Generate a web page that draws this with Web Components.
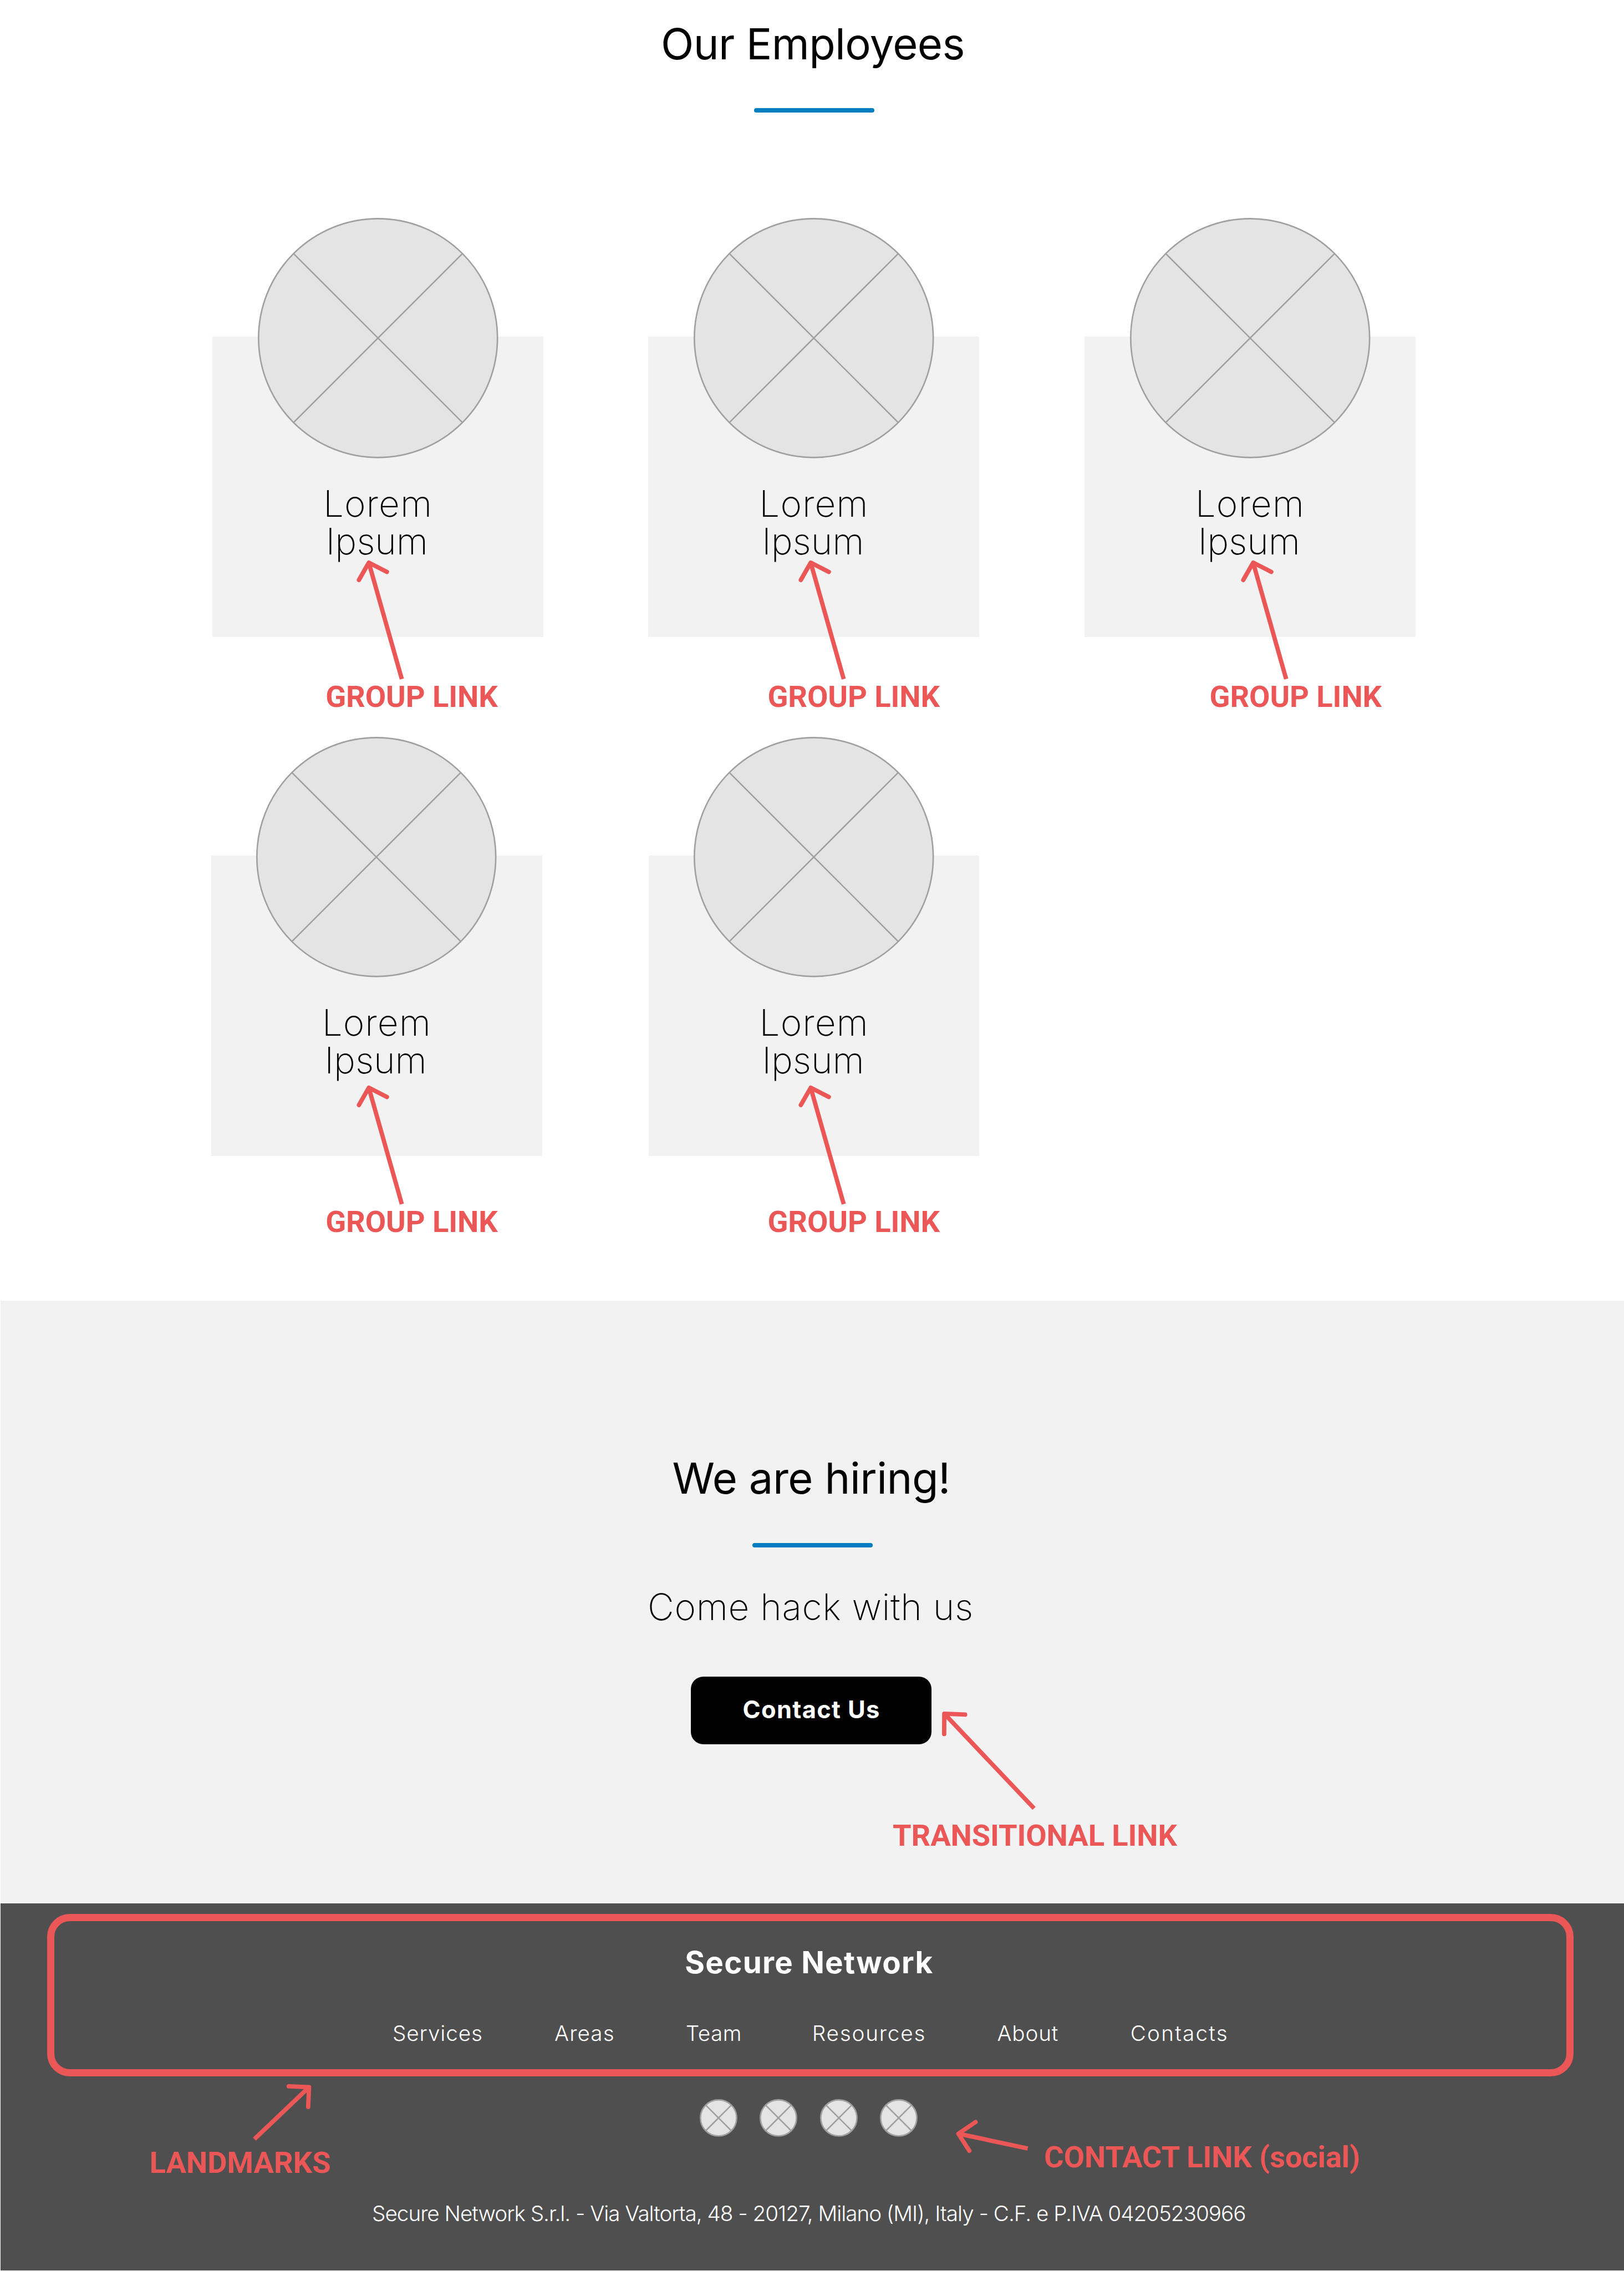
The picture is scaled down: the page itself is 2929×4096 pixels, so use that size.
<!DOCTYPE html>
<html lang="en">
<head>
<meta charset="utf-8">
<title>Our Employees</title>
<style>
  /* 1rem = 100 design units on a 3000-unit wide page */
  html { font-size: calc(100vw / 30); background: #fff; }
  body { margin: 0; font-family: Inter, "Liberation Sans", sans-serif; color: #000; overflow: hidden; }
</style>
</head>
<body>
<wire-page></wire-page>
<script>
const U = () => parseFloat(getComputedStyle(document.documentElement).fontSize) / 100;
const pen = document.createElement('canvas').getContext('2d');
const define = (name, html, setup) => {
  const tpl = document.createElement('template');
  tpl.innerHTML = html;
  customElements.define(name, class extends HTMLElement {
    constructor() {
      super();
      this.attachShadow({ mode: 'open' }).append(tpl.content.cloneNode(true));
    }
    connectedCallback() { if (setup) setup.call(this, this.shadowRoot); }
  });
};

/* One line of text whose box is exactly its inked width and its cap height.
   w: inked width, cap: cap height, size / weight / face: font. */
define('type-line', `
  <style>
    :host { display: flow-root; flex: none; white-space: nowrap; }
    span { display: block; }
  </style>
  <span></span>`, function (root) {
  const u = U(), a = n => this.getAttribute(n);
  const face = a('face') || 'Inter', weight = a('weight') || '400';
  const size = +a('size') * u, cap = +a('cap') * u, w = +a('w') * u;
  const text = this.textContent.trim();
  const span = root.querySelector('span');
  span.textContent = text;
  pen.font = `${weight} ${size}px ${face}, "Liberation Sans", sans-serif`;
  const m = pen.measureText(text);
  const ink = m.actualBoundingBoxLeft + m.actualBoundingBoxRight;
  const rise = Math.round(m.fontBoundingBoxAscent) - Math.round(m.fontBoundingBoxDescent);
  /* whole-pixel line height with an even half-leading keeps the baseline on the box's bottom edge */
  const base = Math.ceil(cap), leading = 2 * base - rise;
  this.style.cssText = `width:${w}px;height:${cap}px`;
  span.style.cssText = `font:${weight} ${size}px/${leading}px ${face},"Liberation Sans",sans-serif;` +
    `letter-spacing:${(w - ink) / (text.length - 1)}px;margin:${cap - base + 1}px 0 0 ${m.actualBoundingBoxLeft}px`;
});

define('accent-bar', `
  <style>:host { display: block; width: 2.225rem; height: .083rem; border-radius: .042rem; background: #007dc0; }</style>`);

define('image-dot', `
  <style>
    :host { display: block; flex: none; width: var(--d); height: var(--d); }
    svg { display: block; width: 100%; height: 100%; overflow: visible; }
  </style>
  <svg><circle cx="50%" cy="50%" fill="#e4e4e4" stroke="#a0a0a0"/><path fill="none" stroke="#a0a0a0"/></svg>`,
  function (root) {
    const d = +this.getAttribute('size'), s = 2.7, r = (d - s) / 2, k = r * Math.SQRT1_2, c = d / 2;
    this.style.setProperty('--d', d / 100 + 'rem');
    const svg = root.querySelector('svg');
    svg.setAttribute('viewBox', `0 0 ${d} ${d}`);
    svg.setAttribute('stroke-width', s);
    root.querySelector('circle').setAttribute('r', r);
    root.querySelector('path').setAttribute('d',
      `M${c - k} ${c - k}L${c + k} ${c + k}M${c + k} ${c - k}L${c - k} ${c + k}`);
  });

define('person-card', `
  <style>
    :host { display: flex; flex: none; flex-direction: column; align-items: center; box-sizing: border-box;
            width: 6.113rem; height: 5.553rem; background: #f2f2f2; }
    image-dot { margin-top: -2.19rem; }
    .first { margin: .575rem 0 .205rem; }
    type-line { margin-right: .025rem; }
  </style>
  <image-dot size="444"></image-dot>
  <type-line class="first" w="189.5" cap="49" size="67.4" weight="200">Lorem</type-line>
  <type-line w="177.5" cap="49" size="67.4" weight="200">Ipsum</type-line>`);

/* Arrow plus caption laid over the page. Coordinates are page units. */
define('arrow-note', `
  <style>
    :host { position: absolute; left: 0; top: 0; color: #eb5757; }
    svg { position: absolute; left: 0; top: 0; width: 1rem; height: 1rem; overflow: visible; }
  </style>
  <svg viewBox="0 0 100 100" fill="none" stroke="#eb5757" stroke-width="8" stroke-linejoin="round">
    <path class="shaft"/><path class="head" stroke-linecap="round"/>
  </svg>`, function (root) {
  const a = n => this.getAttribute(n);
  root.querySelector('.shaft').setAttribute('d', `M${a('tip')}L${a('tail')}`);
  root.querySelector('.head').setAttribute('d', `M${a('wing1')}L${a('tip')}L${a('wing2')}`);
  const [x, base] = a('at').split(' ').map(Number);
  const line = document.createElement('type-line');
  line.setAttribute('face', 'Roboto');
  line.setAttribute('weight', '700');
  line.setAttribute('size', '55.6');
  line.setAttribute('cap', '39.8');
  line.setAttribute('w', a('w'));
  line.textContent = this.textContent;
  const holder = document.createElement('div');
  holder.style.cssText = `position:absolute;left:${x / 100}rem;top:${(base - 39.8) / 100}rem`;
  holder.append(line);
  root.append(holder);
});

define('group-note', `
  <style>:host { position: absolute; left: var(--x); top: var(--y); }</style>
  <arrow-note tip="78 -265.5" tail="139 -50.5" wing1="59.8 -233.5" wing2="111.5 -248.5" at="0 0" w="316.5">GROUP LINK</arrow-note>`,
  function () {
    this.style.setProperty('--x', this.getAttribute('x') / 100 + 'rem');
    this.style.setProperty('--y', this.getAttribute('y') / 100 + 'rem');
  });

define('team-section', `
  <style>
    :host { display: flex; flex-direction: column; box-sizing: border-box; height: 24.027rem; padding-top: .508rem; }
    .title { margin-left: 12.25rem; }
    accent-bar { margin: .917rem 0 0 13.925rem; }
    .row { display: flex; }
    .one { padding-left: 3.923rem; gap: 1.942rem; margin-top: 4.137rem; }
    .two { padding-left: 3.9rem; gap: 1.967rem; margin-top: 4.032rem; }
  </style>
  <type-line class="title" w="554.5" cap="57.5" size="79.5">Our Employees</type-line>
  <accent-bar></accent-bar>
  <div class="row one"><person-card></person-card><person-card></person-card><person-card></person-card></div>
  <div class="row two"><person-card></person-card><person-card></person-card></div>`);

define('contact-button', `
  <style>
    :host { display: flex; justify-content: center; align-items: center; box-sizing: border-box;
            width: 4.445rem; height: 1.25rem; padding-bottom: .05rem; border-radius: .23rem; background: #000; color: #fff; }
  </style>
  <type-line w="250.5" cap="32.2" size="44.5" weight="700">Contact Us</type-line>`);

define('hiring-section', `
  <style>
    :host { display: flex; flex-direction: column; box-sizing: border-box; height: 11.138rem;
            margin-left: .01rem; padding-top: 2.985rem; background: #f2f2f2; }
    .title { margin-left: 12.42rem; }
    accent-bar { margin: .914rem 0 0 13.887rem; }
    .lead { margin: .842rem 0 0 11.995rem; }
    contact-button { margin: 1.055rem 0 0 12.75rem; }
  </style>
  <type-line class="title" w="507.5" cap="57.5" size="79.5">We are hiring!</type-line>
  <accent-bar></accent-bar>
  <type-line class="lead" w="594" cap="49" size="67.4" weight="200">Come hack with us</type-line>
  <contact-button></contact-button>`);

define('site-footer', `
  <style>
    :host { display: flex; flex-direction: column; box-sizing: border-box; height: 6.775rem;
            margin-left: .01rem; padding-top: .195rem; background: #4f4f4f; color: #fff; }
    .landmarks { box-sizing: border-box; width: 28.203rem; height: 3rem; margin-left: .857rem; padding: .54rem 0 0 6.273rem;
                 border: .14rem solid #eb5757; border-radius: .42rem; }
    .brand { margin-left: 5.4rem; }
    nav { display: flex; justify-content: space-between; width: 15.38rem; margin-top: .97rem; }
    .social { display: flex; gap: .415rem; margin: .417rem 0 0 12.917rem; }
    .legal { margin: 1.268rem 0 0 6.884rem; }
  </style>
  <div class="landmarks">
    <type-line class="brand" w="456" cap="40.5" size="56" weight="700">Secure Network</type-line>
    <nav>
      <type-line w="161.7" cap="28.6" size="39.6" weight="350">Services</type-line>
      <type-line w="107.2" cap="28.6" size="39.6" weight="350">Areas</type-line>
      <type-line w="98.2" cap="28.6" size="39.6" weight="350">Team</type-line>
      <type-line w="203.5" cap="28.6" size="39.6" weight="350">Resources</type-line>
      <type-line w="110.9" cap="28.6" size="39.6" weight="350">About</type-line>
      <type-line w="175" cap="28.6" size="39.6" weight="350">Contacts</type-line>
    </nav>
  </div>
  <div class="social">
    <image-dot size="69.5"></image-dot><image-dot size="69.5"></image-dot>
    <image-dot size="69.5"></image-dot><image-dot size="69.5"></image-dot>
  </div>
  <type-line class="legal" w="1610.3" cap="28.6" size="39.6" weight="280">Secure Network S.r.l. - Via Valtorta, 48 - 20127, Milano (MI), Italy - C.F. e P.IVA 04205230966</type-line>`);

define('wire-page', `
  <style>:host { display: block; position: relative; height: 41.95rem; }</style>
  <team-section></team-section>
  <hiring-section></hiring-section>
  <site-footer></site-footer>
  <group-note x="603.5" y="1305.3"></group-note>
  <group-note x="1420" y="1305.3"></group-note>
  <group-note x="2236.5" y="1305.3"></group-note>
  <group-note x="603.5" y="2274.5"></group-note>
  <group-note x="1420" y="2274.5"></group-note>
  <arrow-note tip="1744.5 3166" tail="1910.4 3341" wing1="1783 3167.7" wing2="1744.3 3203.5" at="1650 3408.3" w="525">TRANSITIONAL LINK</arrow-note>
  <arrow-note tip="571 3856" tail="470 3952" wing1="533.5 3854.4" wing2="569.3 3892.5" at="279.3 4013" w="330.5">LANDMARKS</arrow-note>
  <arrow-note tip="1770.5 3942" tail="1898.6 3969.3" wing1="1802.3 3920.5" wing2="1790.8 3973.5" at="1931 4002.8" w="581">CONTACT LINK (social)</arrow-note>`);
</script>
</body>
</html>
